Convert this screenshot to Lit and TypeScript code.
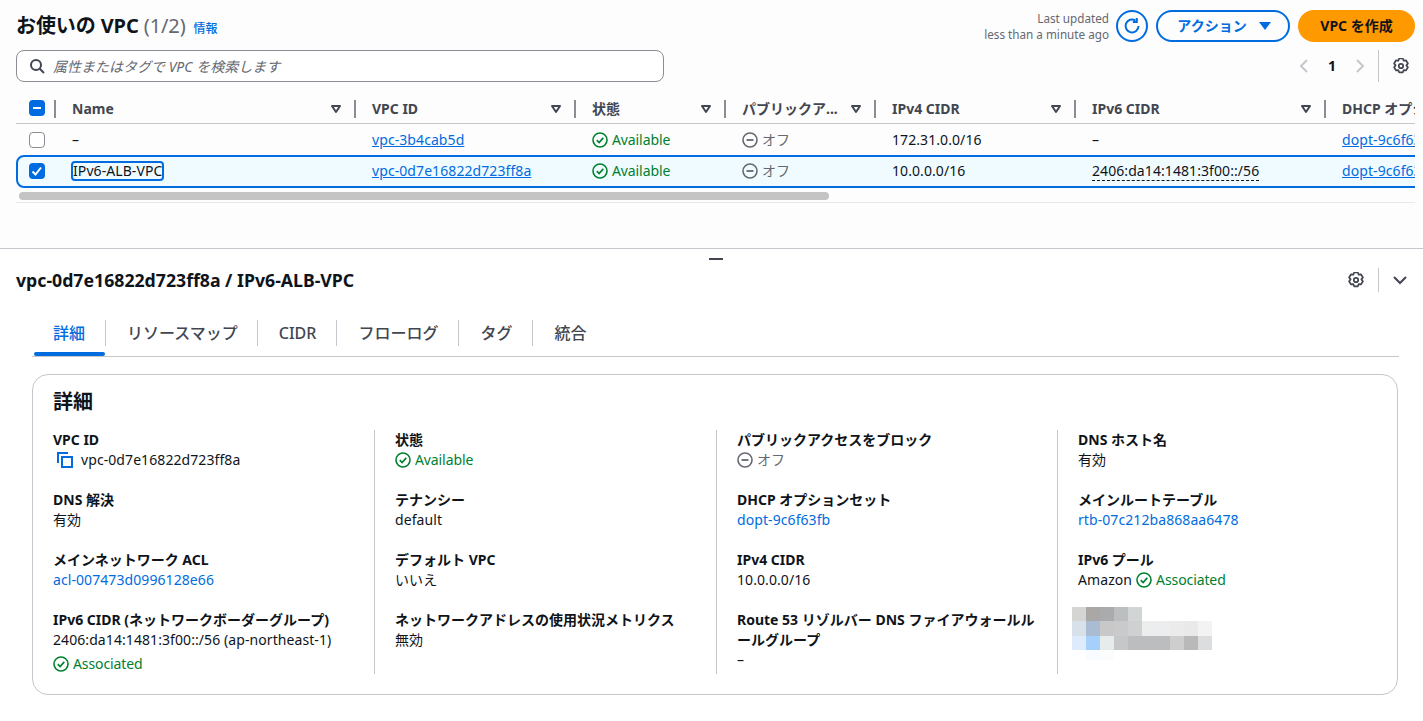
import { LitElement, html, css, svg } from "lit";
import { customElement } from "lit/decorators.js";

const sort = html`<svg class="sort" viewBox="0 0 12 10" width="12" height="10"><path d="M2 2h8L6 8z" fill="none" stroke="#424650" stroke-width="2" stroke-linejoin="round"/></svg>`;
const ok = html`<svg class="st" viewBox="0 0 16 16" width="16" height="16"><circle cx="8" cy="8" r="7" fill="none" stroke="#00802f" stroke-width="1.6"/><path d="M4.8 8.2l2.3 2.3 4.2-4.6" fill="none" stroke="#00802f" stroke-width="1.7"/></svg>`;
const off = html`<svg class="st" viewBox="0 0 16 16" width="16" height="16"><circle cx="8" cy="8" r="7" fill="none" stroke="#656871" stroke-width="1.6"/><path d="M4.5 8h7" fill="none" stroke="#656871" stroke-width="1.8"/></svg>`;
const gear = html`<svg viewBox="1.5 1.5 13 13" width="16" height="16"><path d="M6.5 1.200h3l.7 1.800 1.900-.3 1.500 2.600L12.400 6.800 13.600 8.300l-1.500 2.600-1.900-.3-.7 1.800h-3l-.7-1.800-1.900.3L2.400 8.300 3.600 6.800 2.400 5.300l1.500-2.600 1.900.3z" transform="translate(0 .7)" fill="none" stroke="#424650" stroke-width="1.4" stroke-linejoin="round"/><circle cx="8" cy="8" r="1.800" fill="none" stroke="#424650" stroke-width="1.4"/></svg>`;
const chev = (d: string, c: string) => html`<svg viewBox="0 0 16 16" width="16" height="16"><path d="${d}" fill="none" stroke="${c}" stroke-width="2"/></svg>`;

const heads = ["Name", "VPC ID", "状態", "パブリックア...", "IPv4 CIDR", "IPv6 CIDR", "DHCP オプションセット"];

const pixels = [
  ["#d5d5d3", "#a9a8a7", "#aaabad", "#bdbec0", "#d2d5d5"],
  ["#d8e0ea", "#a9bcd2", "#c8c8c8", "#c9cacb", "#cfd0d2", "#eceeee", "#ecedee", "#ebebeb", "#e9e9e9", "#f3f3f3"],
  ["#deebfd", "#a6cffb", "#e6ecec", "#c6c7c7", "#bcbdbe", "#bcbdbe", "#bcbdbe", "#cecece", "#b9b9b9", "#dcdddf"],
  ["#ffffff", "#f8fbff", "#fcfcfc"],
];

@customElement("app-root")
export class AppRoot extends LitElement {
  static styles = css`
    :host { display: block; width: 1423px; height: 721px; overflow: hidden; background: #fff; color: #0f141a;
      font-family: "Noto Sans", "Noto Sans CJK JP", sans-serif; font-size: 14px; line-height: 20px; }
    * { box-sizing: border-box; }
    a { color: #006ce0; text-decoration: none; }
    .top { height: 249px; background: #fdfdfd; border-bottom: 1px solid #c6c6cd; padding: 10px 8px 0 16px; }
    .hdr { display: flex; justify-content: space-between; height: 32px; }
    .title { display: flex; align-items: baseline; gap: 8px; padding-top: 1px; }
    .title h1 { margin: 0; font-size: 20px; line-height: 30px; font-weight: 700; letter-spacing: -0.1px; }
    .title h1 span { font-weight: 400; color: #656871; }
    .title a { font-size: 12px; font-weight: 500; }
    .acts { display: flex; align-items: center; gap: 8px; }
    .upd { font-size: 11.7px; line-height: 16px; color: #656871; text-align: right; margin-right: -1px; }
    .refresh { width: 32px; height: 32px; border: 2px solid #006ce0; border-radius: 50%; display: flex; align-items: center; justify-content: center; }
    .btn { height: 32px; border-radius: 16px; display: flex; align-items: center; justify-content: center; font-weight: 700; font-size: 14px; }
    .act { width: 134px; border: 2px solid #006ce0; color: #006ce0; gap: 12px; padding-left: 2px; }
    .act i { width: 0; height: 0; border: 6px solid transparent; border-top: 8px solid #006ce0; border-bottom: 0; }
    .create { width: 117px; background: #ff9900; color: #0f141a; }
    .bar { display: flex; justify-content: space-between; margin-top: 8px; height: 32px; }
    .search { width: 648px; border: 1px solid #8c8c94; border-radius: 8px; background: #fff; display: flex; align-items: center; padding-left: 12px; gap: 8px; font-style: italic; color: #656871; }
    .search span { padding-top: 2px; }
    .pager { display: flex; align-items: center; }
    .pager .n { width: 40px; text-align: center; font-weight: 700; }
    .pager .chv { display: flex; }
    .pager .sep { width: 1px; height: 32px; background: #c6c6cd; margin: 0 14px 0 10px; }
    .pager .g { margin-right: 6px; display: flex; }
    .tbl { margin-top: 8px; width: 1399px; overflow: hidden; }
    .grid { display: grid; grid-template-columns: 40px 300px 220px 150px 150px 200px 250px 200px; width: 1510px; align-items: center; letter-spacing: 0.08px; }
    .grid.headrow { grid-template-columns: 38px 300px 220px 150px 150px 200px 250px 200px; padding-top: 5px; height: 34px; border-bottom: 1px solid #c6c6cd; font-weight: 700; color: #424650; white-space: nowrap; letter-spacing: 0; }
    .hc { display: flex; align-items: center; height: 18px; border-left: 2px solid #8c8c94; padding-left: 16px; justify-content: space-between; padding-right: 12px; }
    .hc0 { height: 18px; display: flex; align-items: flex-start; padding-left: 13px; }
    .row { height: 31px; padding-top: 1px; white-space: nowrap; }
    .row > div { padding-left: 16px; }
    .row > .c0 { padding-left: 13px; display: flex; }
    .grid.row.sel { grid-template-columns: 38px 300px 220px 150px 150px 200px 250px 200px; height: 33px; padding-top: 0; padding-bottom: 1px; background: #f0fbff; border: 2px solid #006ce0; border-radius: 8px; }
    .row.sel > .c0 { padding-left: 11px; }
    .row a { text-decoration: underline; }
    .cb { width: 16px; height: 16px; border-radius: 4px; border: 1px solid #8c8c94; background: #fff; }
    .cb.on { background: #006ce0; border: 0; display: flex; align-items: center; justify-content: center; }
    .cell-s { display: flex; align-items: center; gap: 4px; }
    .g-t { color: #00802f; letter-spacing: -0.1px; }
    .o-t { color: #656871; }
    .focus { display: inline-block; border: 2px solid #006ce0; border-radius: 4px; line-height: 16px; margin-left: -1px; padding: 0; }
    .dash { border-bottom: 1px dashed #0f141a; line-height: 18px; display: inline-block; }
    .scroll { margin: 4px 0 0 3px; width: 810px; height: 8px; border-radius: 4px; background: #c4c4c4; }
    .tl { margin-top: 2px; height: 1px; background: #e8e8ec; width: 1399px; }
    .handle { height: 18px; display: flex; justify-content: center; padding: 9px 0 0 9px; }
    .handle i { width: 14px; height: 2px; background: #424650; }
    .det { padding: 0 24px 0 16px; }
    .dh { display: flex; justify-content: space-between; align-items: center; height: 26px; }
    .dh h2 { margin: -1px 0 0; font-size: 17.7px; font-weight: 700; line-height: 24px; }
    .dr { display: flex; align-items: center; margin-right: -9px; }
    .dr .sep { width: 1px; height: 24px; background: #c6c6cd; margin: 0 13px 0 14px; }
    .tabs { margin: 14px 0 0 16px; height: 50px; border-bottom: 1px solid #c6c6cd; display: flex; width: 1367px; }
    .tab { height: 26px; margin-top: 13px; padding: 0 20px 0 21px; font-size: 16px; line-height: 26px; font-weight: 500; color: #424650; border-left: 1px solid #c6c6cd; }
    .tab:first-child { border-left: 0; }
    .tab.on { color: #006ce0; width: 71px; margin-left: 2px; padding: 0 0 0 19px; position: relative; }
    .tab.on + .tab { padding-right: 19px; }
    .tab.on::after { content: ""; position: absolute; left: 0; right: 0; top: 32px; height: 4px; border-radius: 2px; background: #006ce0; }
    .card { margin: 17px 0 0 16px; width: 1366px; height: 321px; border: 1px solid #c6c6cd; border-radius: 16px; padding: 15px 20px 0 20px; }
    .card h3 { margin: 0; font-size: 20px; line-height: 24px; font-weight: 700; }
    .cols { display: grid; grid-template-columns: 321px 342px 341px 1fr; margin-top: 16px; }
    .col { padding-left: 20px; border-left: 1px solid #c6c6cd; display: flex; flex-direction: column; gap: 20px; height: 244px; }
    .col:first-child { padding-left: 0; border-left: 0; }
    .k { font-weight: 700; line-height: 20px; font-size: 14px; max-width: 298px; }
    .v { line-height: 20px; color: #0f141a; font-size: 14px; letter-spacing: 0.08px; }
    .v a { color: #006ce0; }
    .s { display: flex; align-items: center; gap: 4px; }
    .assoc { margin-top: 4px; }
    .copy { display: flex; align-items: center; gap: 8px; padding-left: 4px; }
    .pix { display: block; margin: -3px 0 0 -6px; }
  `;

  private head(h: string) {
    return html`<div class="hc"><span>${h}</span>${h.startsWith("DHCP") ? "" : sort}</div>`;
  }

  private kv(k: unknown, v: unknown) {
    return html`<div><div class="k">${k}</div><div class="v">${v}</div></div>`;
  }

  render() {
    return html`
      <div class="top">
        <div class="hdr">
          <div class="title"><h1>お使いの VPC <span>(1/2)</span></h1><a>情報</a></div>
          <div class="acts">
            <div class="upd">Last updated<br />less than a minute ago</div>
            <div class="refresh"><svg viewBox="0 0 18 18" width="18" height="18"><path d="M15.500 9A6.500 6.500 0 1 1 12.500 3.500" fill="none" stroke="#006ce0" stroke-width="2"/><path d="M13.800 1v4h-4" fill="none" stroke="#006ce0" stroke-width="2"/></svg></div>
            <div class="btn act">アクション<i></i></div>
            <div class="btn create">VPC を作成</div>
          </div>
        </div>
        <div class="bar">
          <div class="search">
            <svg viewBox="0 0 16 16" width="16" height="16"><circle cx="7" cy="7" r="5" fill="none" stroke="#424650" stroke-width="2"/><path d="M10.500 10.500L15 15" stroke="#424650" stroke-width="2"/></svg>
            <span>属性またはタグで VPC を検索します</span>
          </div>
          <div class="pager">
            <span class="chv">${chev("M11 2L5 8l6 6", "#c6c6cd")}</span><span class="n">1</span><span class="chv">${chev("M5 2l6 6-6 6", "#c6c6cd")}</span>
            <span class="sep"></span><span class="g">${gear}</span>
          </div>
        </div>
        <div class="tbl">
          <div class="grid headrow">
            <div class="hc0"><div class="cb on"><svg viewBox="0 0 16 16" width="16" height="16"><path d="M4 8h8" stroke="#fff" stroke-width="2"/></svg></div></div>
            ${heads.map((h) => this.head(h))}
          </div>
          <div class="grid row">
            <div class="c0"><div class="cb"></div></div>
            <div>–</div>
            <div><a>vpc-3b4cab5d</a></div>
            <div class="cell-s">${ok}<span class="g-t">Available</span></div>
            <div class="cell-s">${off}<span class="o-t">オフ</span></div>
            <div>172.31.0.0/16</div>
            <div>–</div>
            <div><a>dopt-9c6f63fb</a></div>
          </div>
          <div class="grid row sel">
            <div class="c0"><div class="cb on"><svg viewBox="0 0 16 16" width="16" height="16"><path d="M3.500 8.500l3 3 5.500-7" fill="none" stroke="#fff" stroke-width="2"/></svg></div></div>
            <div><span class="focus">IPv6-ALB-VPC</span></div>
            <div><a>vpc-0d7e16822d723ff8a</a></div>
            <div class="cell-s">${ok}<span class="g-t">Available</span></div>
            <div class="cell-s">${off}<span class="o-t">オフ</span></div>
            <div>10.0.0.0/16</div>
            <div><span class="dash">2406:da14:1481:3f00::/56</span></div>
            <div><a>dopt-9c6f63fb</a></div>
          </div>
          <div class="scroll"></div>
          <div class="tl"></div>
        </div>
      </div>
      <div class="handle"><i></i></div>
      <div class="det">
        <div class="dh">
          <h2>vpc-0d7e16822d723ff8a / IPv6-ALB-VPC</h2>
          <div class="dr">${gear}<span class="sep"></span>${chev("M2 5l6 6 6-6", "#424650")}</div>
        </div>
        <div class="tabs">
          <div class="tab on">詳細</div>
          <div class="tab">リソースマップ</div>
          <div class="tab">CIDR</div>
          <div class="tab">フローログ</div>
          <div class="tab">タグ</div>
          <div class="tab">統合</div>
        </div>
        <div class="card">
          <h3>詳細</h3>
          <div class="cols">
            <div class="col">
              ${this.kv("VPC ID", html`<div class="copy"><svg viewBox="0 0 16 16" width="16" height="16"><path d="M1 11V1h10" fill="none" stroke="#006ce0" stroke-width="2"/><rect x="5" y="5" width="10" height="10" fill="none" stroke="#006ce0" stroke-width="2"/></svg><span>vpc-0d7e16822d723ff8a</span></div>`)}
              ${this.kv("DNS 解決", "有効")}
              ${this.kv("メインネットワーク ACL", html`<a>acl-007473d0996128e66</a>`)}
              ${this.kv("IPv6 CIDR (ネットワークボーダーグループ)", html`2406:da14:1481:3f00::/56 (ap-northeast-1)<div class="s assoc">${ok}<span class="g-t">Associated</span></div>`)}
            </div>
            <div class="col">
              ${this.kv("状態", html`<div class="s">${ok}<span class="g-t">Available</span></div>`)}
              ${this.kv("テナンシー", "default")}
              ${this.kv("デフォルト VPC", "いいえ")}
              ${this.kv("ネットワークアドレスの使用状況メトリクス", "無効")}
            </div>
            <div class="col">
              ${this.kv("パブリックアクセスをブロック", html`<div class="s">${off}<span class="o-t">オフ</span></div>`)}
              ${this.kv("DHCP オプションセット", html`<a>dopt-9c6f63fb</a>`)}
              ${this.kv("IPv4 CIDR", "10.0.0.0/16")}
              ${this.kv("Route 53 リゾルバー DNS ファイアウォールルールグループ", "–")}
            </div>
            <div class="col">
              ${this.kv("DNS ホスト名", "有効")}
              ${this.kv("メインルートテーブル", html`<a>rtb-07c212ba868aa6478</a>`)}
              ${this.kv("IPv6 プール", html`<div class="s">Amazon ${ok}<span class="g-t">Associated</span></div>`)}
              <svg class="pix" width="140" height="53" shape-rendering="crispEdges">
                ${pixels.map((r, y) => r.map((c, x) => svg`<rect x="${x * 14}" y="${y * 14.3}" width="14" height="14.5" fill="${c}"/>`))}
              </svg>
            </div>
          </div>
        </div>
      </div>
    `;
  }
}
